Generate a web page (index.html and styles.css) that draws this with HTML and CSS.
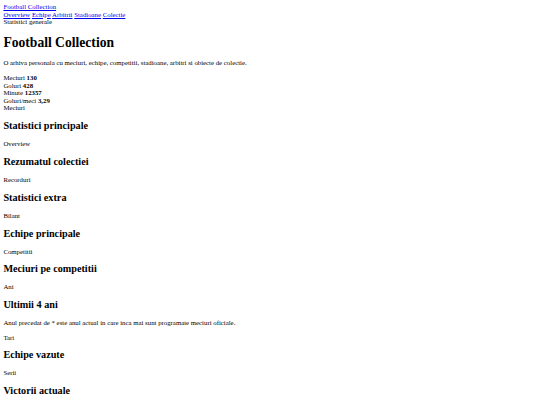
FILE: index.html
```html
<!DOCTYPE html>
<html lang="ro">
<head>
<meta charset="utf-8">
<title>Football Collection</title>
<link rel="stylesheet" href="styles.css">
</head>
<body class="page">
<header class="site-header">
  <a class="brand" href="#">Football Collection</a>
  <nav class="nav"><a href="#">Overview</a> <a href="#">Echipe</a> <a href="#">Arbitrii</a> <a href="#">Stadioane</a> <a href="#">Colectie</a></nav>
  <div class="crumb">Statistici generale</div>
</header>
<main>
  <h1 class="title">Football Collection</h1>
  <p class="lead">O arhiva personala cu meciuri, echipe, competitii, stadioane, arbitri si obiecte de colectie.</p>
  <div class="stats">
    <div>Meciuri <b>130</b></div>
    <div>Goluri <b>428</b></div>
    <div>Minute <b>12357</b></div>
    <div>Goluri/meci <b>3,29</b></div>
  </div>
  <div class="tab">Meciuri</div>
  <h2 class="sec">Statistici principale</h2>
  <div class="label">Overview</div>
  <h2 class="sec">Rezumatul colectiei</h2>
  <div class="label">Recorduri</div>
  <h2 class="sec">Statistici extra</h2>
  <div class="label">Bilant</div>
  <h2 class="sec">Echipe principale</h2>
  <div class="label">Competitii</div>
  <h2 class="sec">Meciuri pe competitii</h2>
  <div class="label">Ani</div>
  <h2 class="sec">Ultimii 4 ani</h2>
  <p class="note">Anul precedat de * este anul actual in care inca mai sunt programate meciuri oficiale.</p>
  <div class="label">Tari</div>
  <h2 class="sec">Echipe vazute</h2>
  <div class="label">Serii</div>
  <h2 class="sec">Victorii actuale</h2>
</main>
</body>
</html>
```
FILE: styles.css
```css
.page {
  margin: 3.3px 3.4px;
  font-family: "Liberation Serif", "Times New Roman", serif;
  font-size: 6.8px;
  line-height: 7.5px;
  color: #000;
}
.page a { color: #00e; text-decoration: underline; }
.title {
  font-size: 13.6px;
  line-height: 15px;
  font-weight: bold;
  margin: 9.2px 0;
}
.lead { margin: 6.8px 0 7.8px; }
.note { margin: 6.8px 0; }
.sec {
  font-size: 10.2px;
  line-height: 11.7px;
  font-weight: bold;
  margin: 8.3px 0;
}
.tab { margin-bottom: 0.8px; }
```
